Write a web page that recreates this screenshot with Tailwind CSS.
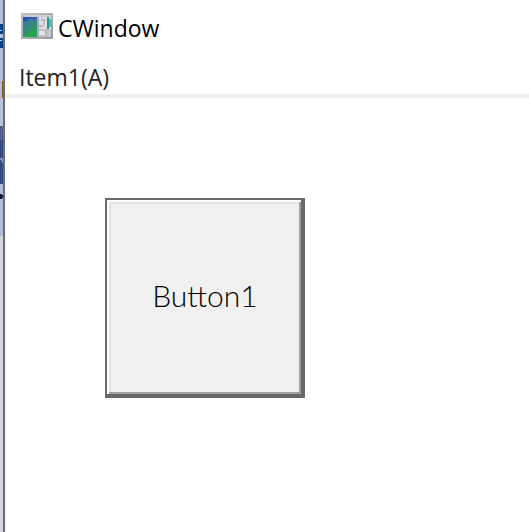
<!DOCTYPE html>
<html lang="en">
<head>
    <meta charset="UTF-8">
    <meta name="viewport" content="width=device-width, initial-scale=1.0">
    <title>CWindow</title>
    <script src="https://cdn.jsdelivr.net/npm/@tailwindcss/browser@4"></script>
</head>
<body class="flex min-h-screen overflow-hidden bg-white font-['Open_Sans','Noto_Sans',sans-serif] text-black">
    <!-- sliver of the window behind -->
    <aside class="flex w-[3px] shrink-0 flex-col bg-[#d3d6da]" aria-hidden="true">
        <div class="h-6 bg-[#b1bcd8]"></div>
        <svg class="h-6 w-full" viewBox="0 0 3 24" shape-rendering="crispEdges">
            <path fill="#b1bcd8" d="M0 0h3v24H0z"/>
            <path fill="#004184" d="M0 0h5v10H0zM0 14h5v10H0z"/>
            <path fill="#c5d5e8" d="M0 6h2v1H0zM0 16h2v1H0z"/>
        </svg>
        <div class="h-[33px] bg-[#b1bcd8]"></div>
        <div class="h-[17px] border-r border-[#8f5a18] bg-[#b1bcd8]"></div>
        <div class="h-7 bg-[#b7c3dc]"></div>
        <div class="h-[14px] bg-[#53608f]"></div>
        <div class="h-[18px] bg-[#364a83]"></div>
        <svg class="h-[26px] w-full" viewBox="0 0 3 26" shape-rendering="crispEdges">
            <path fill="#364a83" d="M0 0h3v26H0z"/>
            <path fill="#8793b8" d="M0 0h3v5H2V3H1V2H0z"/>
        </svg>
        <svg class="h-[52px] w-full" viewBox="0 0 3 52" shape-rendering="crispEdges">
            <path fill="#b1bcd8" d="M0 0h3v52H0z"/>
            <path fill="#101828" d="M0 10h2v1h1v3H2v1H0z"/>
        </svg>
    </aside>

    <main class="flex min-w-0 grow flex-col border-l-2 border-[#6c6c75] bg-white">
        <header class="flex h-[52px] items-start gap-[5px] pt-[13px] pl-4">
            <svg class="h-[26px] w-8 shrink-0" viewBox="0 0 32 26" shape-rendering="crispEdges" aria-hidden="true">
                <defs>
                    <linearGradient id="frame" x2="1" y2="1">
                        <stop offset="0" stop-color="#bfc1c2"/>
                        <stop offset="1" stop-color="#98999b"/>
                    </linearGradient>
                    <linearGradient id="screen" x2="0.6" y2="1">
                        <stop offset="0" stop-color="#3565a4"/>
                        <stop offset="0.5" stop-color="#348886"/>
                        <stop offset="1" stop-color="#20a552"/>
                    </linearGradient>
                </defs>
                <path fill="url(#frame)" d="M0 0h32v26H0z"/>
                <path fill="#c8cacc" d="M2 2h28v2H2z"/>
                <path fill="url(#screen)" d="M2 4h14v20H2z"/>
                <path fill="#2951ad" d="M2 4h8v2H6v2H2z"/>
                <path fill="#3a5fae" d="M10 4h6v2h-2v2h-2V6h-2z"/>
                <path fill="#22a84b" d="M2 22h4v-2h4v-2h4v4h-2v2H2z"/>
                <path fill="#aaa6d2" d="M16 4h2v20h-2z"/>
                <path fill="#dcdddf" d="M18 4h12v12H18z"/>
                <path fill="#b9bbbd" d="M20 6h4v2h-4zM18 12h4v2h-4zM22 8h2v4h-2z"/>
                <path fill="#249b98" d="M26 4h2v12h-2z"/>
                <path fill="#67a9a8" d="M28 6h2v8h-2z"/>
                <path fill="#c2c3c4" d="M18 16h12v8H18z"/>
                <path fill="#e4e5e5" d="M18 18h6v4h-6z"/>
                <path fill="#b2b4b6" d="M24 16h2v8h-2z"/>
            </svg>
            <h1 class="text-[23px] leading-[30px]">CWindow</h1>
        </header>

        <nav class="flex h-[46px] items-end border-b-4 border-[#f0f0f0] pl-[14px]">
            <button type="button" class="text-[23px] leading-[34px] text-[#222222]">Item1(A)</button>
        </nav>

        <div class="pt-[100px] pl-[100px]">
            <!-- classic raised push button, default state -->
            <button type="button" class="size-[200px] border-2 border-r-4 border-b-4 border-[#696969] bg-[#a0a0a0]">
                <span class="flex size-full border-t-2 border-l-2 border-white">
                    <span class="mr-[2px] mb-[2px] flex grow items-center justify-center border-t-2 border-l-2 border-[#e3e3e3] bg-[#f0f0f0] pb-1.5 font-['Lato','Open_Sans',sans-serif] text-[30px] font-light">Button1</span>
                </span>
            </button>
        </div>
    </main>
</body>
</html>
